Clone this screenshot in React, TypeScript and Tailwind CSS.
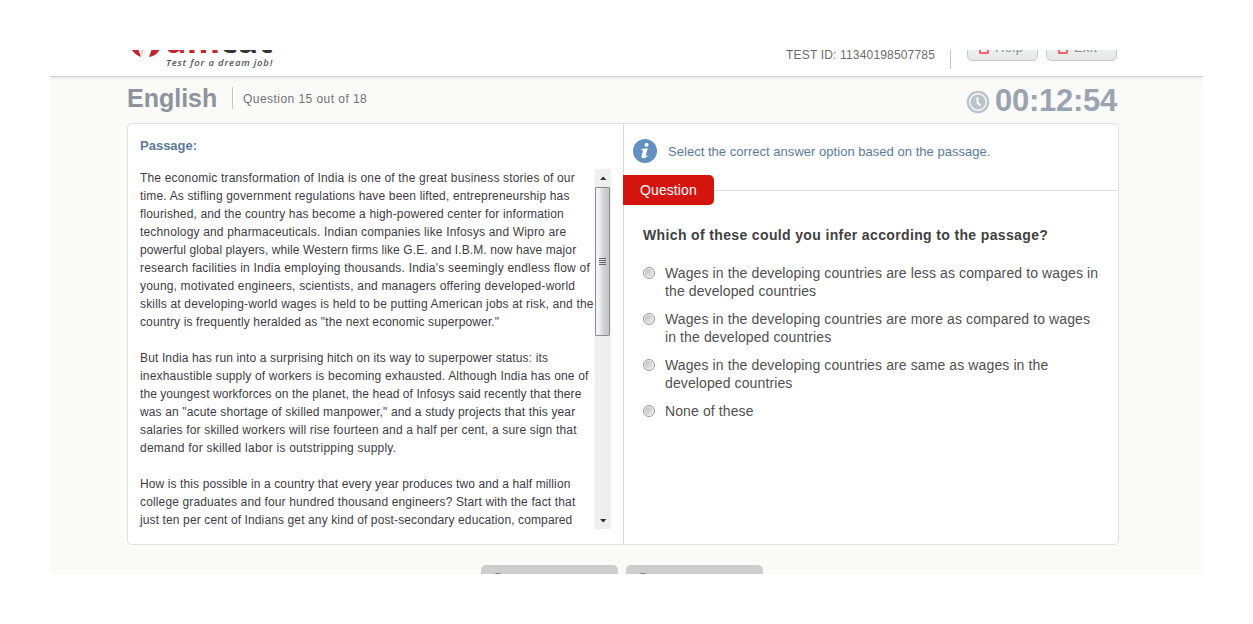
const passage: [string, string][] = [
  ["The economic transformation of India is one of the great business stories of our", "tracking-[0.175px]"],
  ["time. As stifling government regulations have been lifted, entrepreneurship has", "tracking-[0.16px]"],
  ["flourished, and the country has become a high-powered center for information", "tracking-[0.145px]"],
  ["technology and pharmaceuticals. Indian companies like Infosys and Wipro are", "tracking-[0.16px]"],
  ["powerful global players, while Western firms like G.E. and I.B.M. now have major", "tracking-[0.095px]"],
  ["research facilities in India employing thousands. India's seemingly endless flow of", "tracking-[0.21px]"],
  ["young, motivated engineers, scientists, and managers offering developed-world", "tracking-[0.18px]"],
  ["skills at developing-world wages is held to be putting American jobs at risk, and the", "tracking-[0.165px]"],
  ['country is frequently heralded as "the next economic superpower."', "tracking-[0.12px]"],
  ["", ""],
  ["But India has run into a surprising hitch on its way to superpower status: its", "tracking-[0.135px]"],
  ["inexhaustible supply of workers is becoming exhausted. Although India has one of", "tracking-[0.17px]"],
  ["the youngest workforces on the planet, the head of Infosys said recently that there", "tracking-[0.07px]"],
  ['was an "acute shortage of skilled manpower," and a study projects that this year', "tracking-[0.14px]"],
  ["salaries for skilled workers will rise fourteen and a half per cent, a sure sign that", "tracking-[0.17px]"],
  ["demand for skilled labor is outstripping supply.", "tracking-[0.23px]"],
  ["", ""],
  ["How is this possible in a country that every year produces two and a half million", "tracking-[0.11px]"],
  ["college graduates and four hundred thousand engineers? Start with the fact that", "tracking-[0.14px]"],
  ["just ten per cent of Indians get any kind of post-secondary education, compared", "tracking-[0.12px]"],
];

const options: string[][] = [
  ["Wages in the developing countries are less as compared to wages in", "the developed countries"],
  ["Wages in the developing countries are more as compared to wages", "in the developed countries"],
  ["Wages in the developing countries are same as wages in the", "developed countries"],
  ["None of these"],
];

function Logo() {
  return (
    <div className="flex h-[26px] w-[160px] items-start overflow-hidden">
      <svg width="37" height="26" viewBox="0 0 37 26" className="shrink-0">
        <path d="M3 0H9.5L12 7Q6 5 3 0Z" fill="#c4252a" />
        <path d="M10 0H15L17.5 2L13.5 7Z" fill="#f8eeee" />
        <path d="M13.5 0L12 4.5" stroke="#dd8a8c" strokeWidth="0.7" />
        <path d="M22.5 0H30.5Q27 6 20 7Z" fill="#c4252a" />
      </svg>
      <div className="flex shrink-0 flex-col">
        <div className="h-[5px] overflow-hidden">
          <div className="mt-[-28px] font-['Open_Sans',sans-serif] text-[34px] leading-[36px] font-bold tracking-[0.1px] text-[#333336]">
            <span className="text-[#c4252a]">am</span>cat
          </div>
        </div>
        <div className="font-['Open_Sans',sans-serif] text-[9.5px] leading-[15px] font-semibold tracking-[0.8px] whitespace-nowrap text-[#555] italic">
          Test for a dream job!
        </div>
      </div>
    </div>
  );
}

function HeaderButton({ label }: { label: string }) {
  return (
    <div className="flex h-[28px] w-[71px] items-center rounded-[5px] border border-[#c9c9c9] bg-linear-to-b from-[#f7f7f7] to-[#e6e8e9] pt-[2px] pl-[11px] text-[13px] leading-[16px] tracking-[0.4px] text-[#8d8d8d]">
      <span className="mr-[6px] h-[11px] w-[10px] rounded-[1px] border-2 border-[#f0666c] bg-[#f9eeee]" />
      {label}
    </div>
  );
}

function Scrollbar() {
  return (
    <div className="flex h-[360px] w-[16px] shrink-0 flex-col bg-[#efefef]">
      <svg width="16" height="18" viewBox="0 0 16 18">
        <path d="M5 11L8.2 7.5L11.5 11Z" fill="#333" />
      </svg>
      <div className="flex h-[149px] w-[15px] flex-col items-center justify-center gap-px rounded-[1px] border border-[#8c8c8c] bg-linear-to-r from-[#f4f4f4] from-20% via-[#d3d4d7] via-55% to-[#c2c3c6]">
        <span className="h-px w-[7px] bg-[#666]" />
        <span className="h-px w-[7px] bg-[#666]" />
        <span className="h-px w-[7px] bg-[#666]" />
        <span className="h-px w-[7px] bg-[#666]" />
      </div>
      <svg className="mt-auto" width="16" height="18" viewBox="0 0 16 18">
        <path d="M5 8L8.2 11.5L11.5 8Z" fill="#333" />
      </svg>
    </div>
  );
}

function FooterButton() {
  return (
    <div className="h-[32px] w-[137px] rounded-[5px] bg-[#cecece] pt-[8px] pl-[10px]">
      <div className="h-[14px] w-[14px] rounded-full bg-[#777]" />
    </div>
  );
}

export default function App() {
  return (
    <div className="h-[624px] w-[1253px] bg-white p-[50px] font-['Liberation_Sans',Arial,sans-serif]">
      <div className="h-[524px] w-[1153px] overflow-hidden bg-[#fafaf8]">
        <header className="flex h-[27px] justify-between border-b border-[#cfcfcf] bg-white pr-[86px] pl-[79px] shadow-[0_1px_4px_rgba(0,0,0,0.1)]">
          <Logo />
          <div className="flex h-[26px] items-start overflow-hidden">
            <span className="mt-[-2px] text-[12px] leading-[14px] tracking-[0.17px] text-[#6b6b6b]">TEST ID: 11340198507785</span>
            <span className="ml-[15px] h-[19px] w-px bg-[#c4c4c4]" />
            <div className="mt-[-17px] ml-[16px] flex gap-[8px]">
              <HeaderButton label="Help" />
              <HeaderButton label="Exit" />
            </div>
          </div>
        </header>
        <div className="flex h-[46px] justify-between pr-[86px] pl-[77px]">
          <div className="flex items-start">
            <h1 className="mt-[6px] w-[90px] text-[25px] leading-[30px] font-bold text-[#8e939c]">English</h1>
            <span className="mt-[10px] ml-[15px] h-[22px] w-px bg-[#c8c8c8]" />
            <span className="mt-[14px] ml-[10px] text-[12px] leading-[16px] tracking-[0.45px] text-[#737373]">Question 15 out of 18</span>
          </div>
          <div className="flex items-start">
            <svg className="mt-[13px] mr-[5px]" width="24" height="24" viewBox="0 0 24 24">
              <circle cx="12" cy="12" r="11.3" fill="#bdc3ca" />
              <circle cx="12" cy="12" r="8.3" fill="none" stroke="#fafaf8" strokeWidth="1.4" />
              <path d="M11.5 7V12.5L14.5 15.5" fill="none" stroke="#fafaf8" strokeWidth="2" />
            </svg>
            <span className="mt-[7px] text-[31px] leading-[34px] font-bold tracking-[-0.25px] text-[#9aa4b1]">00:12:54</span>
          </div>
        </div>
        <main className="ml-[77px] flex h-[422px] w-[992px] rounded-[5px] border border-[#e0e0e0] bg-white">
          <section className="w-[495px] shrink-0">
            <h2 className="mt-[13px] ml-[12px] text-[13px] leading-[18px] font-bold text-[#5a7a9d]">Passage:</h2>
            <div className="mt-[14px] ml-[12px] flex h-[360px]">
              <div className="w-[455px] shrink-0 text-[12px] leading-[18px] whitespace-nowrap text-[#403c44]">
                {passage.map(([text, spacing], i) => (
                  <div key={i} className="h-[18px]">
                    <span className={spacing}>{text}</span>
                  </div>
                ))}
              </div>
              <Scrollbar />
            </div>
          </section>
          <section className="flex-1 border-l border-[#d9d9d9]">
            <div className="flex h-[51px] items-start pl-[9px]">
              <svg className="mt-[15px]" width="24" height="24" viewBox="0 0 24 24">
                <circle cx="12" cy="12" r="12" fill="#6290c0" />
                <ellipse cx="13.5" cy="5.8" rx="2" ry="1.9" fill="#fff" />
                <path d="M8.3 10.1L14.7 9.2L12.8 16.2Q12.6 17.5 14.5 16.2L14.9 16.8Q12.4 19.4 10.1 19.3Q8 19 8.7 16.6L9.9 11.9Q10 11 8.3 11Z" fill="#fff" />
              </svg>
              <span className="mt-[19px] ml-[11px] text-[13px] leading-[18px] tracking-[0.03px] text-[#5a7a9d]">Select the correct answer option based on the passage.</span>
            </div>
            <div className="-ml-px flex items-center">
              <div className="h-[30px] w-[91px] rounded-r-[5px] bg-[#d4140e] pl-[17px] text-[14px] leading-[30px] tracking-[0.1px] text-white">Question</div>
              <div className="h-px flex-1 bg-[#dedede]" />
            </div>
            <h3 className="mt-[20px] ml-[19px] text-[14px] leading-[20px] font-bold tracking-[0.36px] whitespace-nowrap text-[#414141]">
              Which of these could you infer according to the passage?
            </h3>
            <div className="mt-[19px] ml-[19px] flex flex-col gap-[10px]">
              {options.map((lines) => (
                <label key={lines[0]} className="flex text-[14px] leading-[18px] tracking-[0.11px] whitespace-nowrap text-[#505050]">
                  <span className="mt-[3px] mr-[10px] flex h-[12px] w-[12px] items-center justify-center rounded-full border border-[#969696] bg-[#f3f3f3]">
                    <span className="h-[8px] w-[8px] rounded-full bg-linear-to-br from-[#bcbcbc] to-[#eeeeee]" />
                  </span>
                  <span>
                    {lines.map((line) => (
                      <span key={line} className="block">{line}</span>
                    ))}
                  </span>
                </label>
              ))}
            </div>
          </section>
        </main>
        <div className="mt-[20px] ml-[431px] flex gap-[8px]">
          <FooterButton />
          <FooterButton />
        </div>
      </div>
    </div>
  );
}
